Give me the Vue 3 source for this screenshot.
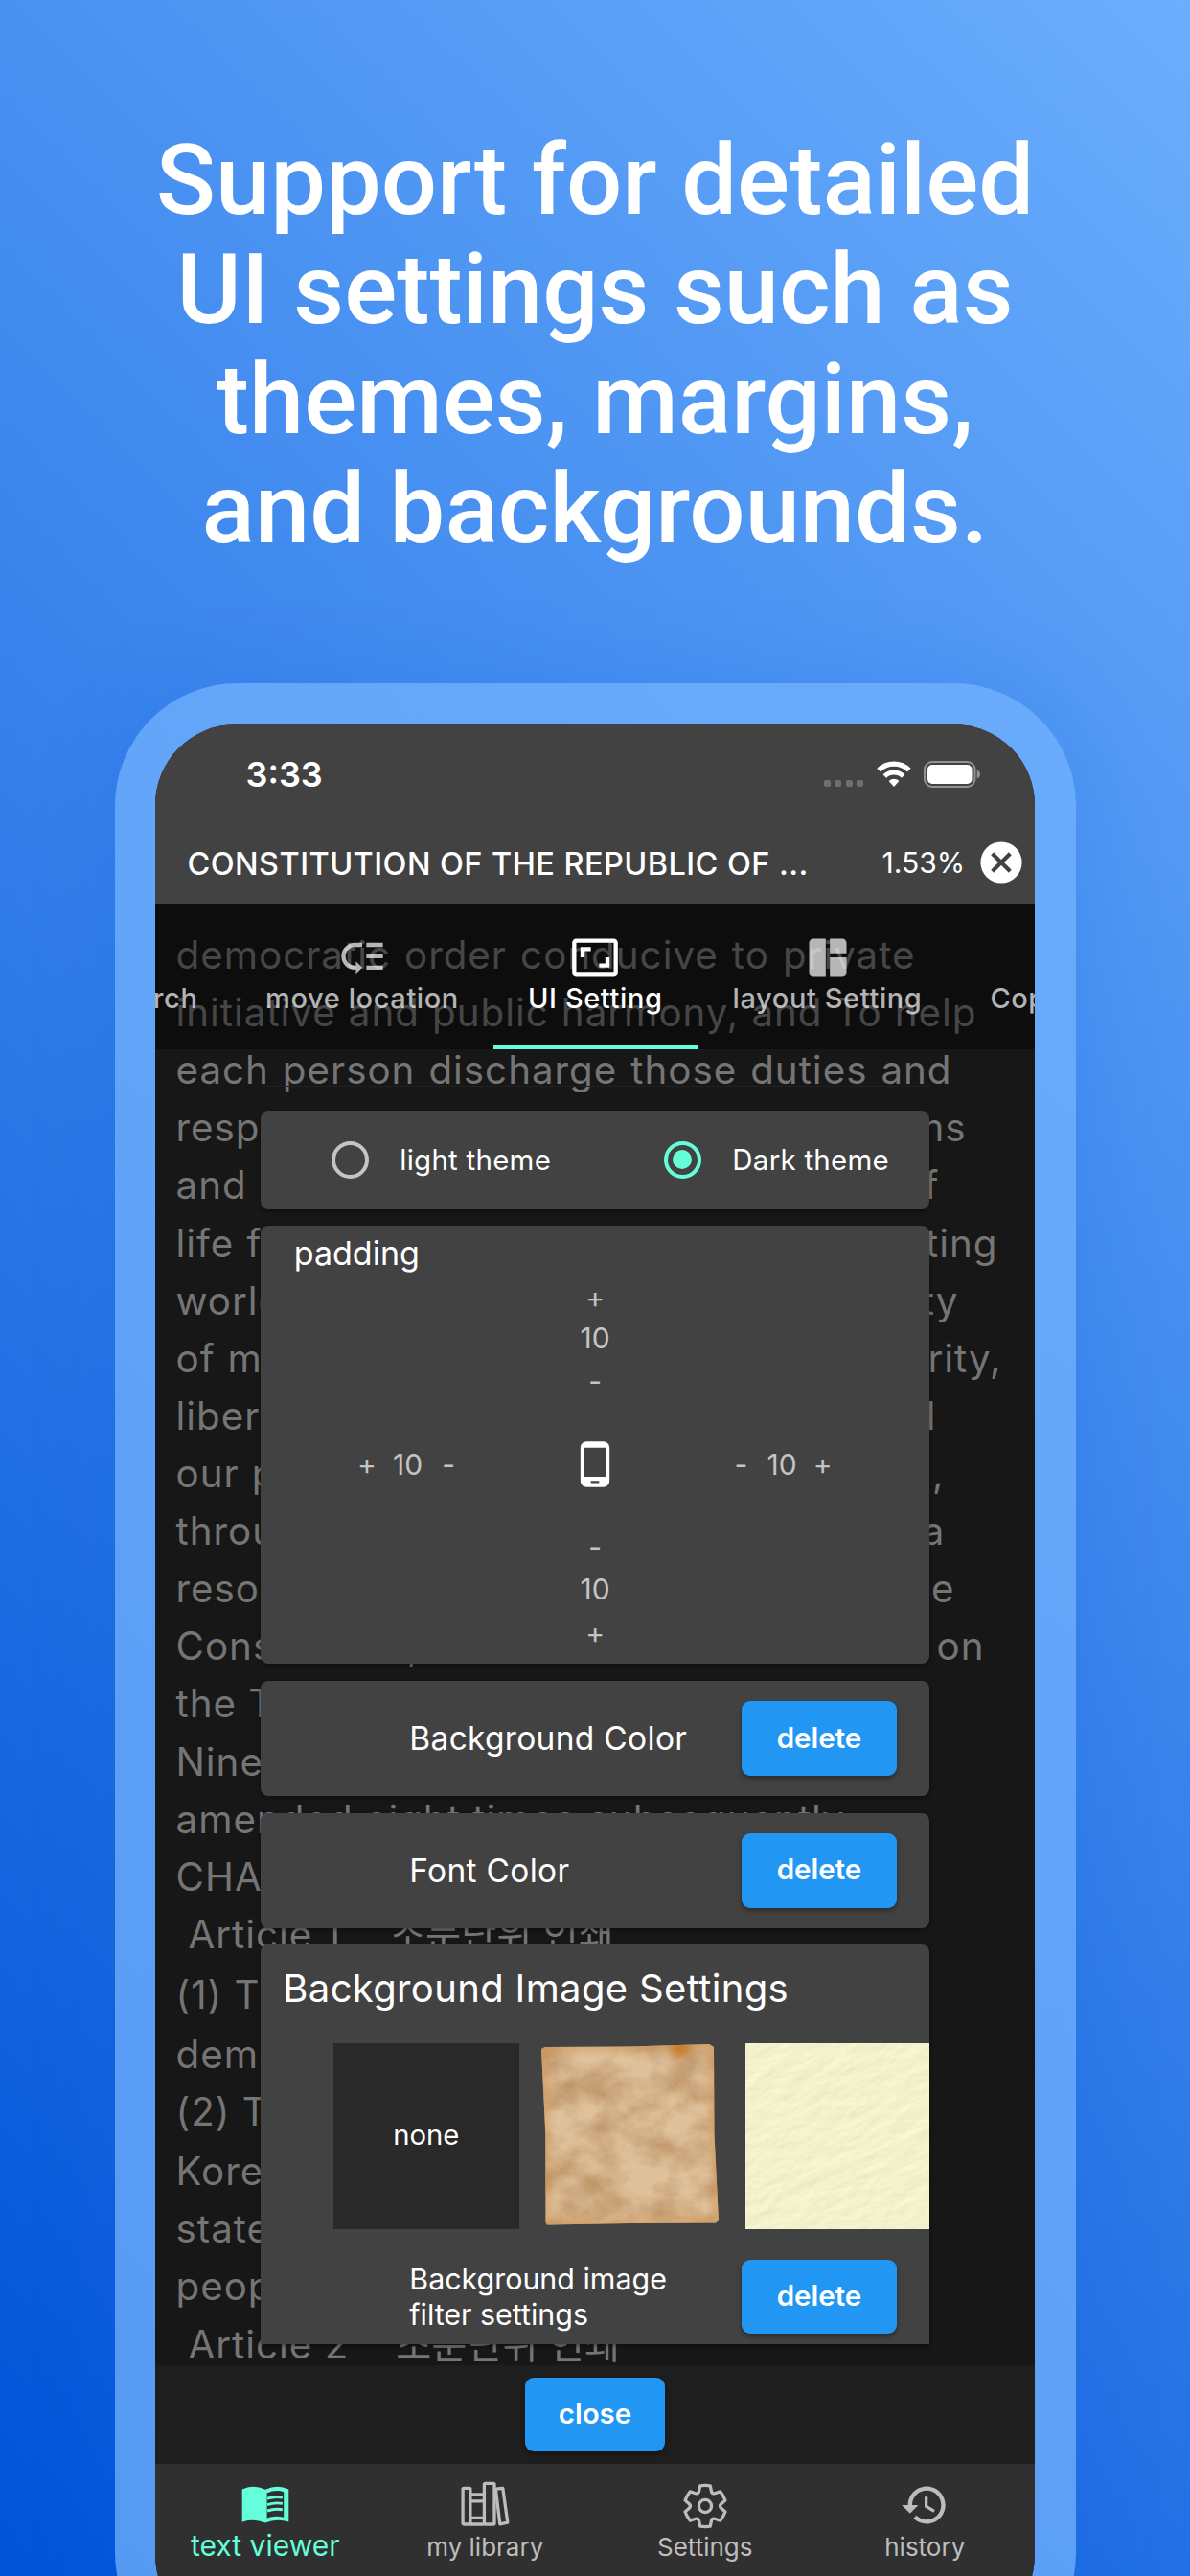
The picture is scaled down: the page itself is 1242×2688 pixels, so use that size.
<script setup>
const headline = [
  'Support for detailed',
  'UI settings such as',
  'themes, margins,',
  'and backgrounds.',
]

// Reader page: w is the justified line width, gap is extra leading before the line.
const page = [
  { t: 'democratic order conducive to private', w: 772 },
  { t: 'initiative and public harmony, and To help', w: 836 },
  { t: 'each person discharge those duties and', w: 810 },
  { t: 'responsibilities concomitant to freedoms', w: 825 },
  { t: 'and rights and To elevate the quality of', w: 797 },
  { t: 'life for all citizens and contribute to lasting', w: 858 },
  { t: 'world peace and the common prosperity', w: 817 },
  { t: 'of mankind and thereby to ensure security,', w: 862 },
  { t: 'liberty and happiness for ourselves and', w: 794 },
  { t: 'our posterity forever, Do hereby amend,', w: 802 },
  { t: 'through national referendum following a', w: 803 },
  { t: 'resolution by the National Assembly, the', w: 813 },
  { t: 'Constitution, ordained and established on', w: 844 },
  { t: 'the Twelfth Day of July anno Domini' },
  { t: 'Nineteen hundred and forty-eight, and' },
  { t: 'amended eight times subsequently.' },
  { t: 'CHAPTER I. GENERAL PROVISIONS' },
  { t: 'Article 1', ko: '조문단위 인쇄', koGap: 51 },
  { t: '(1) The Republic of Korea shall be a', gap: 3 },
  { t: 'democratic republic.', gap: 1.6 },
  { t: '(2) The sovereignty of the Republic of', gap: 0.3 },
  { t: 'Korea shall reside in the people, and all', gap: 1.7 },
  { t: 'state authority shall emanate from the', gap: 0.3 },
  { t: 'people.' },
  { t: 'Article 2', ko: '조문단위 인쇄', koGap: 49, gap: 0.8 },
]

const lineStyle = (l) => ({
  width: l.w ? l.w + 'px' : undefined,
  marginTop: l.gap ? l.gap + 'px' : undefined,
})

const tabs = [
  { label: 'text search', cls: 'tab-search', d: 'M15.5 14h-.79l-.28-.27A6.47 6.47 0 0 0 16 9.5 6.5 6.5 0 1 0 9.5 16c1.61 0 3.09-.59 4.23-1.57l.27.28v.79l5 4.99L20.49 19l-4.99-5z' },
  { label: 'move location', cls: 'tab-move', d: 'M14 5h8v2h-8zm0 5.5h8v2h-8zm0 5.5h8v2h-8zM2 11.5C2 15.08 4.92 18 8.5 18H9v2l3-3-3-3v2h-.5C6.02 16 4 13.98 4 11.5S6.02 7 8.5 7H12V5H8.5C4.92 5 2 7.92 2 11.5z' },
  { label: 'UI Setting', cls: 'tab-ui active', d: 'M19 12h-2v3h-3v2h5v-5zM7 9h3V7H5v5h2V9zm14-6H3c-1.1 0-2 .9-2 2v14c0 1.1.9 2 2 2h18c1.1 0 2-.9 2-2V5c0-1.1-.9-2-2-2zm0 16.01H3V4.99h18v14.02z' },
  { label: 'layout Setting', cls: 'tab-layout', d: 'M11 21H5c-1.1 0-2-.9-2-2V5c0-1.1.9-2 2-2h6v18zm2 0h6c1.1 0 2-.9 2-2v-7h-8v9zm8-11V5c0-1.1-.9-2-2-2h-6v7h8z' },
  { label: 'Copy', cls: 'tab-copy', d: '' },
]

// Six-tooth cog outline centred on 0,0.
function cogPath() {
  const pt = (r, deg) => {
    const a = ((deg - 90) * Math.PI) / 180
    return `${(r * Math.cos(a)).toFixed(2)} ${(r * Math.sin(a)).toFixed(2)}`
  }
  let d = ''
  for (let i = 0; i < 6; i++) {
    const c = i * 60
    d += `${i ? 'L' : 'M'}${pt(16.6, c - 23)} L${pt(21.8, c - 14)} Q${pt(22, c)} ${pt(21.8, c + 14)} L${pt(16.6, c + 23)} Q${pt(14.6, c + 30)} ${pt(16.6, c + 37)} `
  }
  return d + 'Z'
}
const cog = cogPath()
</script>

<template>
  <main class="poster">
    <h1 class="headline">
      <span v-for="l in headline" :key="l">{{ l }}</span>
    </h1>

    <div class="phone">
      <div class="screen">
        <div class="statusbar">
          <span class="clock">3:33</span>
          <div class="status-icons">
            <div class="dots"><i /><i /><i /><i /></div>
            <svg class="wifi" width="38" height="28" viewBox="0 0 38 28">
              <path d="M3.2 9.6 A22.5 22.5 0 0 1 34.8 9.6" fill="none" stroke="#fff" stroke-width="5.2" />
              <path d="M9.3 16 A13.7 13.7 0 0 1 28.7 16" fill="none" stroke="#fff" stroke-width="5" />
              <path d="M13.6 21 Q19 16.6 24.4 21 L19 27 Z" fill="#fff" />
            </svg>
            <svg class="battery" width="60" height="28" viewBox="0 0 60 28">
              <rect x="1" y="1" width="52.5" height="26" rx="8" fill="none" stroke="#929292" stroke-width="2" />
              <rect x="4" y="4" width="46.5" height="20" rx="5" fill="#fff" />
              <path d="M55.7 9.5 Q59 11 59 14 T55.7 18.5 Z" fill="#929292" />
            </svg>
          </div>
        </div>

        <header class="titlebar">
          <span class="title">CONSTITUTION OF THE REPUBLIC OF ...</span>
          <span class="progress">1.53%</span>
          <svg class="dismiss" width="44" height="44" viewBox="0 0 44 44">
            <circle cx="22" cy="22" r="21.6" fill="#fff" />
            <path d="M12.7 12.7 31.3 31.3 M31.3 12.7 12.7 31.3" stroke="#424242" stroke-width="4.2" />
          </svg>
        </header>

        <section class="viewer">
          <div class="page">
            <div
              v-for="(l, i) in page"
              :key="i"
              class="line"
              :class="{ fit: l.w, article: l.ko }"
              :style="lineStyle(l)"
            >{{ l.t }}<span v-if="l.ko" class="ko" :style="{ marginLeft: l.koGap + 'px' }">{{ l.ko }}</span></div>
          </div>

          <div class="overlay">
            <nav class="tabs">
              <div v-for="t in tabs" :key="t.label" class="tab" :class="t.cls">
                <svg width="52" height="52" viewBox="0 0 24 24"><path :d="t.d" fill="currentColor" /></svg>
                <span>{{ t.label }}</span>
              </div>
            </nav>
            <div class="rule" />

            <div class="cards">
              <div class="card themes">
                <span class="radio" />
                <span class="theme-label light">light theme</span>
                <span class="radio on" />
                <span class="theme-label dark">Dark theme</span>
              </div>

              <div class="card padding">
                <div class="padding-title">padding</div>
                <div class="step s1">+</div>
                <div class="step s2">10</div>
                <div class="step s3">-</div>
                <div class="middle">
                  <div class="group"><span>+</span><span>10</span><span>-</span></div>
                  <svg width="52" height="52" viewBox="0 0 24 24">
                    <path fill="#fff" d="M16 1H8C6.34 1 5 2.34 5 4v16c0 1.66 1.34 3 3 3h8c1.66 0 3-1.34 3-3V4c0-1.66-1.34-3-3-3zm-2 20h-4v-1h4v1zm3.25-3H6.75V4h10.5v14z" />
                  </svg>
                  <div class="group"><span>-</span><span>10</span><span>+</span></div>
                </div>
                <div class="step s3">-</div>
                <div class="step s2">10</div>
                <div class="step s4">+</div>
              </div>

              <div class="card option">
                <span class="option-label">Background Color</span>
                <button>delete</button>
              </div>
              <div class="card option">
                <span class="option-label">Font Color</span>
                <button>delete</button>
              </div>

              <div class="card images">
                <div class="images-title">Background Image Settings</div>
                <div class="thumbs">
                  <div class="thumb none">none</div>
                  <svg class="thumb" width="194" height="194" viewBox="0 0 194 194">
                    <defs>
                      <filter id="blotch" x="0" y="0" width="1" height="1" color-interpolation-filters="sRGB">
                        <feTurbulence type="fractalNoise" baseFrequency="0.024 0.032" numOctaves="5" seed="11" />
                        <feColorMatrix values="0 0 0 0 .71  0 0 0 0 .53  0 0 0 0 .35  1.5 0 0 0 -.5" />
                        <feComposite in2="SourceGraphic" operator="in" />
                      </filter>
                      <filter id="soften" x="-.2" y="-.2" width="1.4" height="1.4"><feGaussianBlur stdDeviation="5" /></filter>
                      <clipPath id="sheet"><path d="M2 6 L6 4 L95 3.6 L177 1 L182 4 L182.5 95 L187 185 L184 187.5 L95 188 L8 189.5 L6.5 187 L6.3 95 Z" /></clipPath>
                    </defs>
                    <g clip-path="url(#sheet)">
                      <rect width="194" height="194" fill="#dfc29c" />
                      <rect width="194" height="194" fill="#000" filter="url(#blotch)" />
                      <path d="M2 6 L6 4 L95 3.6 L177 1 L182 4 L182.5 95 L187 185 L95 188 L8 189.5 L6.3 95 Z" fill="none" stroke="#cf8e48" stroke-opacity=".7" stroke-width="7" filter="url(#soften)" />
                      <g filter="url(#soften)">
                        <path d="M134 -2h26l-4 12-14 4z" fill="#c87620" />
                        <path d="M42 138l16-2 4 9-9 16-13-8z" fill="#b0834f" opacity=".6" />
                      </g>
                    </g>
                  </svg>
                  <svg class="thumb" width="194" height="194" viewBox="0 0 194 194">
                    <filter id="emboss" x="0" y="0" width="1" height="1" color-interpolation-filters="sRGB">
                      <feTurbulence type="fractalNoise" baseFrequency="0.035 0.075" numOctaves="4" seed="4" />
                      <feDiffuseLighting surfaceScale="0.38" diffuseConstant="1.12" lighting-color="#f5f5cd">
                        <feDistantLight azimuth="250" elevation="62" />
                      </feDiffuseLighting>
                    </filter>
                    <g transform="rotate(-20 97 97)">
                      <rect x="-60" y="-60" width="320" height="320" filter="url(#emboss)" />
                    </g>
                  </svg>
                </div>
                <div class="filter-row">
                  <span class="filter-label">Background image<br />filter settings</span>
                  <button>delete</button>
                </div>
              </div>
            </div>
          </div>
        </section>

        <div class="closebar"><button class="close">close</button></div>

        <nav class="bottomnav">
          <div class="item current">
            <svg width="52" height="52" viewBox="0 0 52 52">
              <path fill="currentColor" fill-rule="evenodd" d="M1.7 9.6 Q13.5 3.6 26 9.8 Q38.5 3.6 50.3 9.6 V43.6 Q38 39.6 26 44.4 Q13.5 39.6 1.7 43.6 Z M27.6 13.4 V39.6 Q36 36.4 45.2 38.8 V12.2 Q36.5 9.4 27.6 13.4 Z" />
              <path fill="none" stroke="currentColor" stroke-width="2.9" d="M28 19.2 Q36 16.6 43.8 18 M28 25.6 Q36 23 43.8 24.4 M28 32 Q36 29.4 43.8 30.8" />
            </svg>
            <span>text viewer</span>
          </div>
          <div class="item">
            <svg width="52" height="52" viewBox="0 0 52 52">
              <g fill="none" stroke="currentColor" stroke-width="3.3" stroke-linejoin="round">
                <rect x="3.1" y="8.4" width="7.8" height="37.6" rx="1" />
                <path d="M10.9 15h14M10.9 21.8h14M10.9 39.4h14M10.9 46h14" />
                <rect x="25.4" y="3.4" width="10.6" height="42.6" rx="1" />
                <path d="M37.4 9.2 L44.8 8.4 L49.8 44.2 L41.8 45.8 Z" />
              </g>
            </svg>
            <span>my library</span>
          </div>
          <div class="item">
            <svg width="52" height="52" viewBox="-26 -27 52 52">
              <g fill="none" stroke="currentColor" stroke-width="3.3" stroke-linejoin="round">
                <path :d="cog" />
                <circle r="6.6" />
              </g>
            </svg>
            <span>Settings</span>
          </div>
          <div class="item">
            <svg width="52" height="52" viewBox="0 0 24 24">
              <path fill="currentColor" d="M13 3c-4.97 0-9 4.03-9 9H1l3.89 3.89.07.14L9 12H6c0-3.87 3.13-7 7-7s7 3.13 7 7-3.13 7-7 7c-1.93 0-3.68-.79-4.94-2.06l-1.42 1.42C8.27 19.99 10.51 21 13 21c4.97 0 9-4.03 9-9s-4.03-9-9-9zm-1 5v5l4.28 2.54.72-1.21-3.5-2.08V8H12z" />
            </svg>
            <span>history</span>
          </div>
        </nav>
      </div>
    </div>
  </main>
</template>

<style>
body {
  margin: 0;
  overflow: hidden;
}
</style>

<style scoped>
* {
  box-sizing: border-box;
}
.poster {
  width: 1242px;
  height: 2688px;
  overflow: hidden;
  display: flex;
  flex-direction: column;
  align-items: center;
  background: linear-gradient(45deg, #0053d8, #6baefd);
  font-family: Inter, 'Noto Sans CJK KR', sans-serif;
  color: #fff;
  white-space: nowrap;
}
.headline {
  margin: 0;
  padding-top: 131px;
  height: 713px;
  flex: none;
  display: flex;
  flex-direction: column;
  align-items: center;
  font: 500 102.8px/114.3px Roboto, sans-serif;
}
.phone {
  flex: none;
  width: 1003px;
  height: 2079px;
  padding: 42.5px;
  border-radius: 128px;
  background: linear-gradient(45deg, #5599f4, #6aacfb);
  box-shadow: 0 0 90px rgba(20, 100, 228, 0.2);
}
.screen {
  height: 100%;
  border-radius: 84px;
  overflow: hidden;
  display: flex;
  flex-direction: column;
  background: #303030;
}
.statusbar {
  height: 107.5px;
  flex: none;
  display: flex;
  justify-content: space-between;
  background: #424242;
}
.clock {
  margin: 32px 0 0 94.5px;
  font-weight: 600;
  font-size: 36px;
  line-height: 40px;
}
.status-icons {
  display: flex;
  align-items: flex-start;
  padding-top: 38.5px;
  margin-right: 56px;
}
.dots {
  display: flex;
  gap: 4.4px;
  padding-top: 19.5px;
  margin-right: 13px;
}
.dots i {
  width: 7px;
  height: 7px;
  border-radius: 2px;
  background: #6f6f6f;
}
.battery {
  margin-left: 12px;
}
.titlebar {
  height: 80px;
  flex: none;
  display: flex;
  align-items: center;
  background: #424242;
  padding-left: 33.5px;
}
.title {
  width: 725px;
  font-weight: 500;
  font-size: 32.5px;
  letter-spacing: 0.43px;
  line-height: 40px;
  margin-top: -3px;
}
.progress {
  width: 102px;
  font-size: 30px;
  line-height: 40px;
  margin-top: -6px;
}
.dismiss {
  margin-top: -7px;
}
.viewer {
  position: relative;
  flex: none;
  height: 1524.7px;
  overflow: hidden;
  background: #171717;
}
.page {
  padding: 24px 0 0 21.5px;
  color: #757575;
  font-size: 40.3px;
  letter-spacing: 1px;
}
.line {
  height: 60.12px;
  line-height: 60.12px;
}
.line.fit {
  text-align-last: justify;
  white-space: normal;
}
.line.article {
  padding-left: 13px;
}
.ko {
  letter-spacing: 0;
}
.overlay {
  position: absolute;
  inset: 0;
}
.tabs {
  height: 151.5px;
  display: flex;
  overflow: hidden;
  background: rgba(0, 0, 0, 0.4);
}
.tab {
  flex: none;
  display: flex;
  flex-direction: column;
  align-items: center;
  padding-top: 29.5px;
  color: rgba(255, 255, 255, 0.7);
  font-weight: 500;
  font-size: 29px;
  letter-spacing: 0.6px;
  line-height: 34px;
}
.tab svg {
  flex: none;
}
.tab.active {
  color: #fff;
  border-bottom: 5px solid #64ffda;
}
.tab-search {
  width: 230px;
  margin-left: -150.5px;
  padding-right: 35px;
  align-items: flex-end;
}
.tab-search svg {
  margin-right: 54px;
}
.tab-move {
  width: 273px;
}
.tab-ui {
  width: 213.5px;
}
.tab-layout {
  width: 271px;
}
.tab-copy {
  width: 144px;
}
.rule {
  height: 1px;
  margin: 38px 110px 25.5px;
  background: #212121;
}
.cards {
  width: 697.7px;
  margin-left: 110.3px;
  display: flex;
  flex-direction: column;
  gap: 17.7px;
}
.card {
  border-radius: 8px;
  background: #424242;
  box-shadow: 0 2px 4px rgba(0, 0, 0, 0.4);
}
.themes {
  height: 102.7px;
  display: flex;
  align-items: center;
  padding-left: 73.5px;
  font-size: 29.5px;
  letter-spacing: 0.25px;
}
.radio {
  width: 39px;
  height: 39px;
  border: 4.5px solid #c4c4c4;
  border-radius: 50%;
  display: flex;
}
.radio.on {
  border-color: #64ffda;
}
.radio.on::after {
  content: '';
  width: 20px;
  height: 20px;
  margin: auto;
  border-radius: 50%;
  background: #64ffda;
}
.theme-label {
  margin-left: 32.5px;
}
.theme-label.light {
  width: 275.5px;
}
.padding {
  height: 457px;
  color: #c4c4c4;
  font-size: 30px;
  text-align: center;
}
.padding-title {
  height: 55px;
  padding: 9px 0 0 34.5px;
  text-align: left;
  color: #fff;
  font-size: 34px;
  line-height: 40px;
}
.s1 {
  line-height: 41px;
}
.s2 {
  line-height: 43px;
}
.s3 {
  line-height: 46px;
}
.s4 {
  line-height: 48px;
}
.middle {
  height: 127px;
  display: flex;
  align-items: center;
  justify-content: space-between;
  padding: 0 90px 0 89.4px;
}
.group {
  display: flex;
}
.group span {
  width: 42.6px;
}
.option {
  height: 120px;
  display: flex;
  align-items: center;
  padding-left: 155px;
}
.option-label {
  width: 346.7px;
  font-size: 33.5px;
  letter-spacing: 0.3px;
}
button {
  width: 162px;
  height: 77.5px;
  border: 0;
  border-radius: 9px;
  padding: 0 0 3px;
  background: #2196f3;
  color: #fff;
  font: 600 29.5px Inter, sans-serif;
  box-shadow: 0 3px 5px rgba(0, 0, 0, 0.35);
}
.images {
  height: 417px;
  border-radius: 8px 8px 0 0;
  overflow: hidden;
}
.images-title {
  height: 102.5px;
  padding: 20.5px 0 0 23px;
  font-size: 40px;
  letter-spacing: 0.35px;
  line-height: 50px;
}
.thumbs {
  display: flex;
  padding-left: 75.5px;
}
.thumb {
  flex: none;
  width: 194px;
  height: 194px;
}
.thumb + .thumb {
  margin-left: 21px;
}
.thumb.none {
  display: flex;
  align-items: center;
  justify-content: center;
  background: #292929;
  font-size: 29.3px;
  padding-bottom: 2px;
}
.filter-row {
  display: flex;
  padding: 32px 0 0 155px;
}
.filter-label {
  width: 346.7px;
  font-size: 30.4px;
  line-height: 36.6px;
  padding-top: 2.5px;
}
.closebar {
  height: 103.3px;
  flex: none;
  display: flex;
  align-items: center;
  justify-content: center;
  background: #1e1e1e;
}
.close {
  width: 146px;
}
.bottomnav {
  flex: 1;
  display: flex;
  padding-top: 17px;
  background: #303030;
}
.item {
  flex: 1;
  display: flex;
  flex-direction: column;
  align-items: center;
  color: #bdbdbd;
  font-size: 26px;
  line-height: 36px;
}
.item.current {
  color: #64ffda;
  font-size: 30px;
  line-height: 32px;
}
</style>
